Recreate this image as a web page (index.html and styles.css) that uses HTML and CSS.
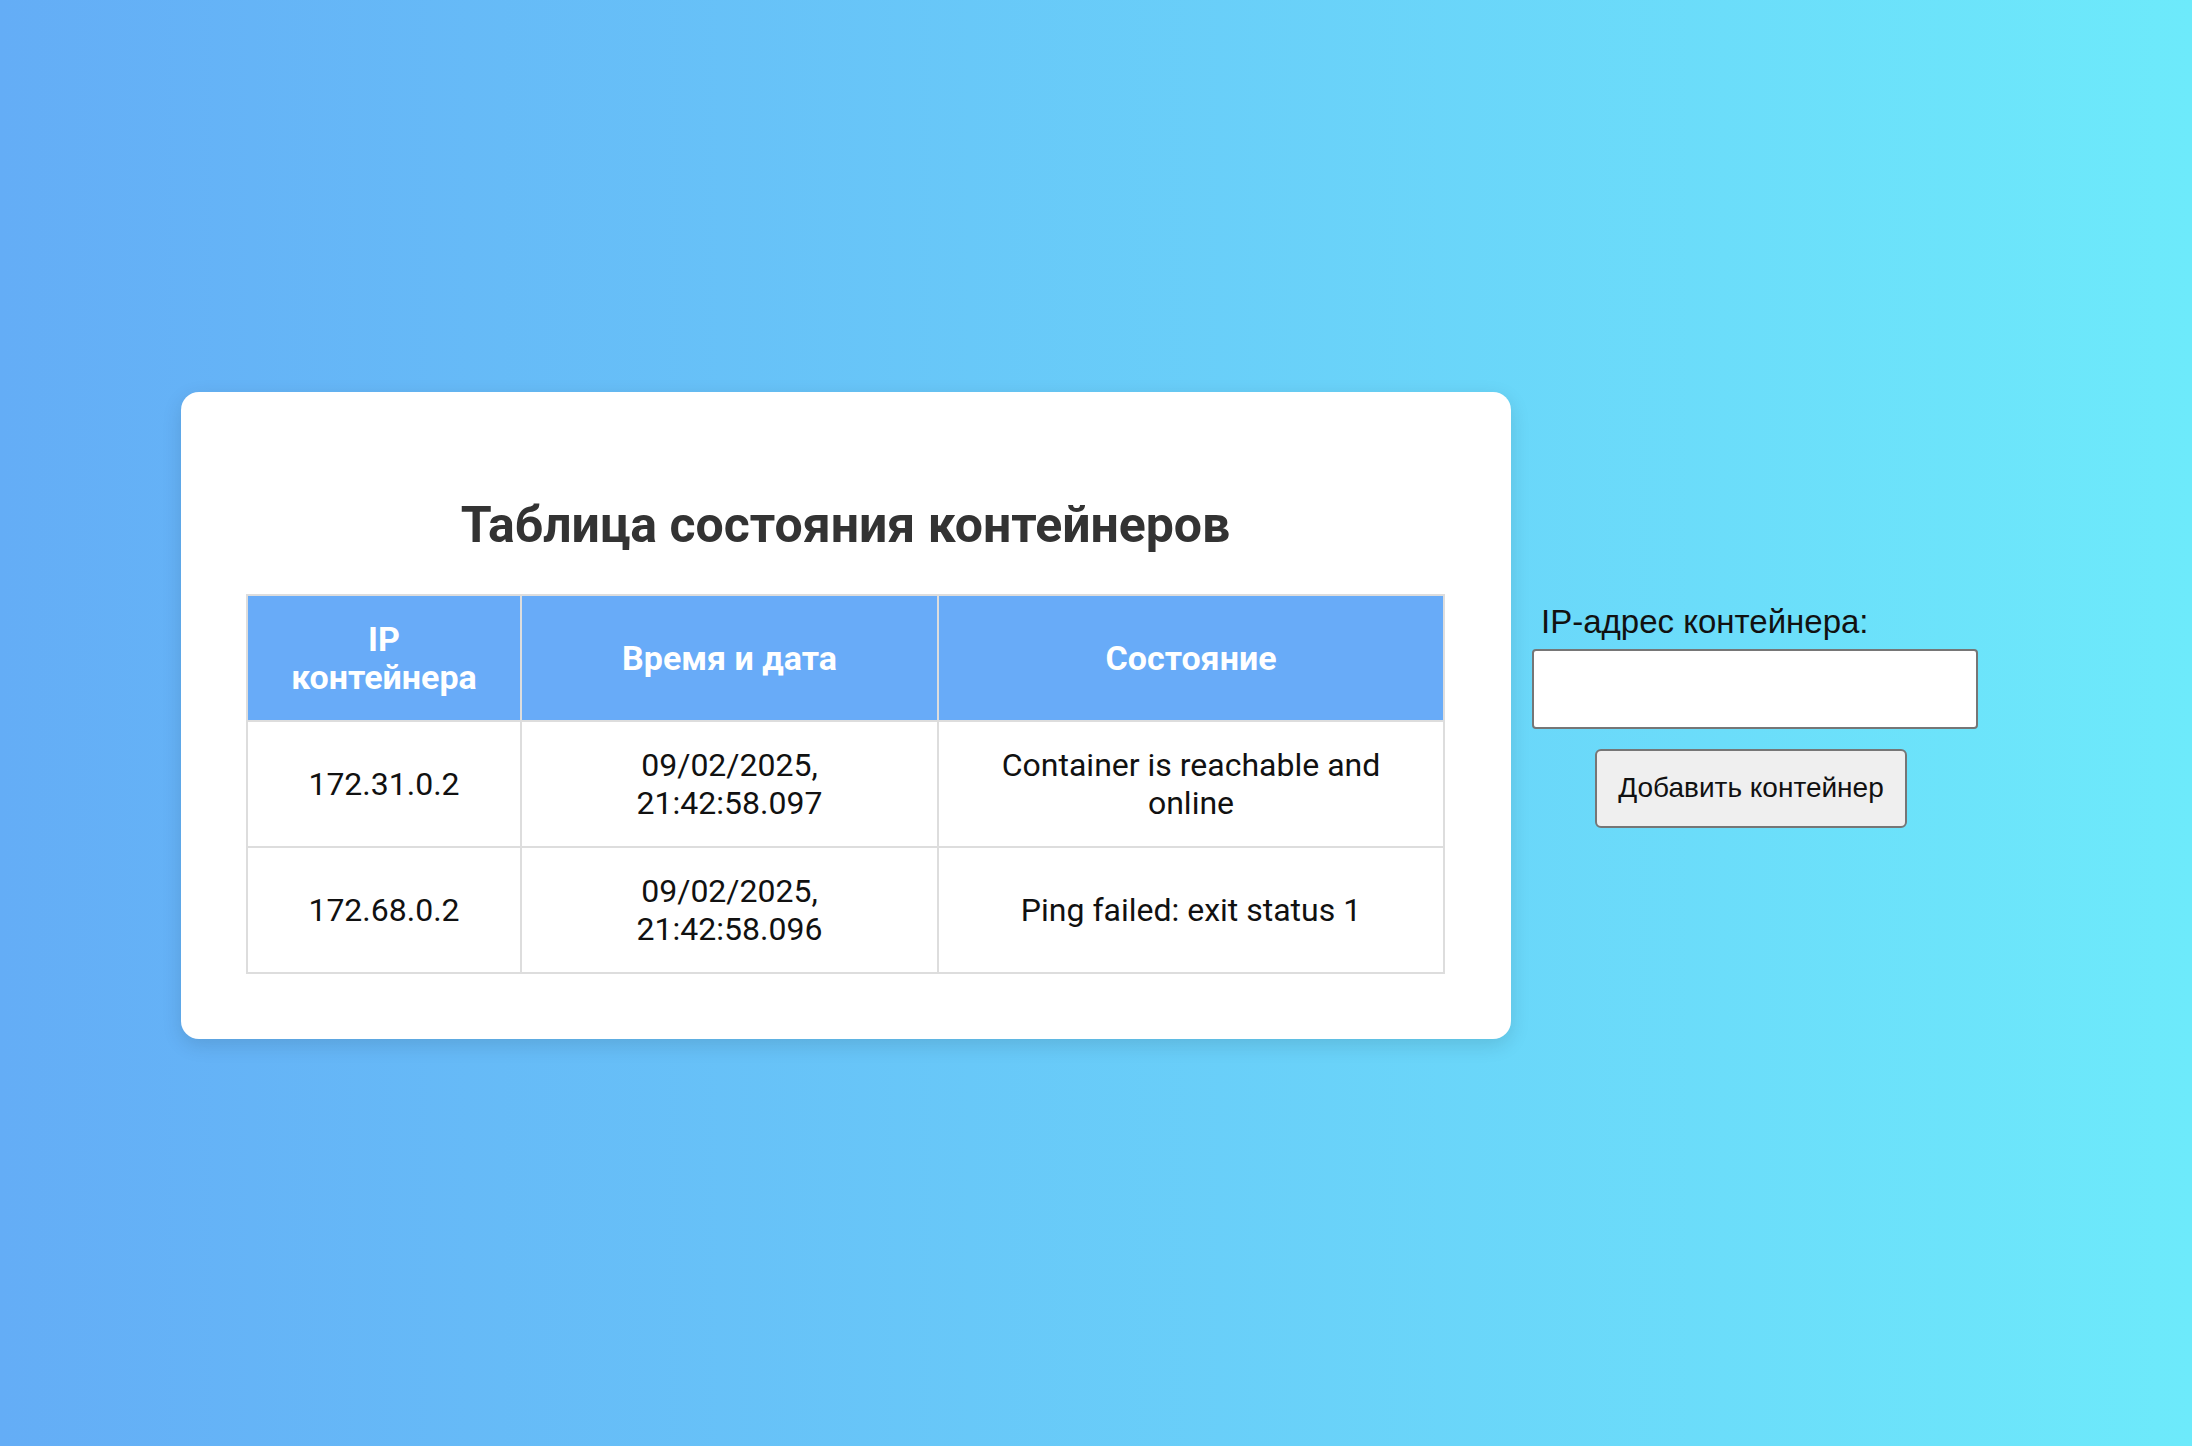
FILE: index.html
```html
<!DOCTYPE html>
<html lang="ru">
<head>
<meta charset="utf-8">
<title>Таблица состояния контейнеров</title>
<link rel="stylesheet" href="styles.css">
</head>
<body>
<main class="page">
  <section class="card">
    <h2 class="title">Таблица состояния контейнеров</h2>
    <table class="status-table">
      <thead>
        <tr>
          <th class="col-ip">IP контейнера</th>
          <th class="col-time">Время и дата</th>
          <th class="col-state">Состояние</th>
        </tr>
      </thead>
      <tbody>
        <tr>
          <td>172.31.0.2</td>
          <td>09/02/2025,<br>21:42:58.097</td>
          <td>Container is reachable and<br>online</td>
        </tr>
        <tr>
          <td>172.68.0.2</td>
          <td>09/02/2025,<br>21:42:58.096</td>
          <td>Ping failed: exit status 1</td>
        </tr>
      </tbody>
    </table>
  </section>
  <form class="add-form">
    <label class="add-label" for="ip">IP-адрес контейнера:</label>
    <input class="add-input" id="ip" type="text">
    <button class="add-button" type="button">Добавить контейнер</button>
  </form>
</main>
</body>
</html>
```
FILE: styles.css
```css
html, body {
  margin: 0;
  padding: 0;
  height: 100%;
}

body {
  background: linear-gradient(to right, #64adf6 0%, #6deafb 100%);
  font-family: Roboto, "Liberation Sans", sans-serif;
}

.page {
  box-sizing: border-box;
  min-height: 100%;
  padding-bottom: 16px;
  display: flex;
  align-items: center;
  justify-content: center;
  gap: 21px;
}

.card {
  flex-shrink: 0;
  background: #ffffff;
  border-radius: 18px;
  padding: 64px 66px 65px 65px;
  box-shadow: 0 6px 20px rgba(0, 0, 0, 0.12);
}

.title {
  margin: 40px 0 40px;
  text-align: center;
  font-size: 50px;
  line-height: 58px;
  font-weight: 700;
  color: #333333;
}

.status-table {
  border-collapse: collapse;
  width: 1197px;
  table-layout: fixed;
}

.status-table th,
.status-table td {
  box-sizing: border-box;
  border: 2px solid #dddddd;
  text-align: center;
  vertical-align: middle;
  padding: 24px 34px;
  font-size: 32px;
  line-height: 38px;
}

.status-table th {
  background: #68abf8;
  color: #ffffff;
  font-weight: 700;
  font-size: 34px;
  height: 125px;
}

.status-table td {
  color: #111111;
  font-weight: 400;
  height: 126px;
}

.col-ip { width: 274px; }
.col-time { width: 417px; }
.col-state { width: 506px; }

.add-form {
  flex-shrink: 0;
  display: flex;
  flex-direction: column;
  align-items: center;
  width: 446px;
  padding-right: 33px;
  font-family: "Liberation Sans", Arial, sans-serif;
}

.add-label {
  align-self: stretch;
  padding-left: 9px;
  font-size: 33px;
  line-height: 38px;
  color: #111111;
  margin-bottom: 8px;
}

.add-input {
  box-sizing: border-box;
  width: 446px;
  height: 80px;
  border: 2px solid #767676;
  border-radius: 4px;
  background: #ffffff;
  margin: 0 0 20px;
}

.add-button {
  box-sizing: border-box;
  width: 312px;
  height: 79px;
  margin-right: 8px;
  border: 2px solid #767676;
  border-radius: 6px;
  background: #efefef;
  font-family: "Liberation Sans", Arial, sans-serif;
  font-size: 28px;
  color: #111111;
}
```
